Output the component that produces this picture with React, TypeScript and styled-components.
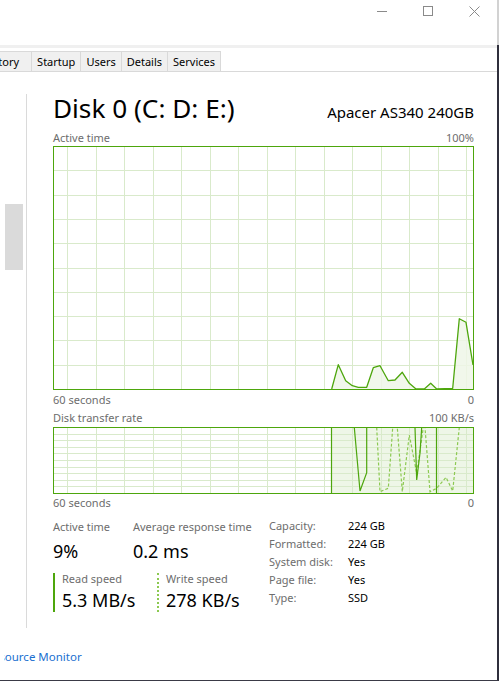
import React from 'react';
import styled, { createGlobalStyle } from 'styled-components';

const GREEN = '#4da60c';
const GRID = '#d9eacb';
const FILL = '#eef6e7';
const WRITE = '#8cc951';
const MUTED = '#6d6d6d';

const GlobalStyle = createGlobalStyle`
    html, body {
        margin: 0;
        padding: 0;
        background: #ffffff;
        font-family: "Noto Sans", "DejaVu Sans", sans-serif;
        color: #000000;
    }
`;

const Window = styled.div`
    width: 499px;
    height: 681px;
    display: flex;
    flex-direction: column;
    overflow: hidden;
`;

const TitleBar = styled.div`
    height: 45px;
    box-sizing: border-box;
    display: flex;
    justify-content: flex-end;
    align-items: flex-start;
    border-right: 2px solid #d2d2d2;
`;

const CaptionButton = styled.div`
    width: 46px;
    height: 22px;
    display: flex;
    align-items: center;
    justify-content: center;
`;

const Frame = styled.div`
    flex: 1;
    box-sizing: border-box;
    display: flex;
    flex-direction: column;
    border-right: 2px solid #2f2f3c;
    border-bottom: 1px solid #3a3a46;
    overflow: hidden;
`;

const Band = styled.div`
    height: 3px;
    background: #f0f0f0;
`;

const TabStrip = styled.div`
    margin-top: 3px;
    display: flex;
    border-bottom: 1px solid #d9d9d9;
`;

// the first tab is scrolled partly out of view on the left
const Tab = styled.div<{ $lead?: number }>`
    height: 20px;
    box-sizing: border-box;
    margin-left: ${p => (p.$lead ? `${p.$lead}px` : '-1px')};
    padding: 0 ${p => (p.$lead ? '12px' : '5px')} 0 5px;
    border: 1px solid #d9d9d9;
    border-bottom: none;
    background: #f0f0f0;
    font-size: 11px;
    line-height: 19px;
    white-space: nowrap;
    color: #000;
`;

const Body = styled.div`
    display: flex;
`;

const Sidebar = styled.div`
    width: 26px;
    height: 534px;
    margin-top: 22px;
    border-right: 1px solid #dadada;
`;

const ScrollThumb = styled.div`
    width: 18px;
    height: 66px;
    margin: 110px 0 0 5px;
    background: #dadada;
`;

const Main = styled.div`
    width: 421px;
    margin-left: 26px;
    padding-top: 20px;
`;

const HeaderRow = styled.div`
    display: flex;
    justify-content: space-between;
    align-items: baseline;
    height: 32px;
`;

const DiskTitle = styled.div`
    font-size: 26.2px;
    line-height: 32px;
    white-space: nowrap;
`;

const DiskModel = styled.div`
    font-size: 15px;
    white-space: nowrap;
`;

const CaptionRow = styled.div<{ $h: number; $end?: boolean }>`
    height: ${p => p.$h}px;
    display: flex;
    justify-content: space-between;
    align-items: ${p => (p.$end ? 'flex-end' : 'center')};
    font-size: 11px;
    line-height: 16px;
    color: ${MUTED};
`;

const ChartSvg = styled.svg`
    display: block;
`;

const Stats = styled.div`
    display: flex;
    align-items: flex-start;
    padding-top: 5px;
`;

const LeftStats = styled.div`
    width: 216px;
    padding-top: 2px;
`;

const Pair = styled.div`
    display: flex;
`;

const StatCell = styled.div<{ $w?: number }>`
    width: ${p => (p.$w ? `${p.$w}px` : 'auto')};
`;

const StatLabel = styled.div`
    font-size: 11px;
    line-height: 16px;
    color: ${MUTED};
    white-space: nowrap;
`;

const StatValue = styled.div`
    margin-top: 4px;
    font-size: 18px;
    line-height: 24px;
    white-space: nowrap;
`;

const SpeedRow = styled.div`
    display: flex;
    margin-top: 10px;
`;

const SpeedBlock = styled.div<{ $dotted?: boolean; $w?: number }>`
    width: ${p => (p.$w ? `${p.$w}px` : 'auto')};
    box-sizing: border-box;
    padding-left: 7px;
    border-left: 2px ${p => (p.$dotted ? `dotted ${WRITE}` : `solid ${GREEN}`)};
`;

const SpeedLabel = styled.div`
    font-size: 11px;
    line-height: 12px;
    color: ${MUTED};
    white-space: nowrap;
`;

const SpeedValue = styled.div`
    margin-top: 3px;
    font-size: 18px;
    line-height: 24px;
    white-space: nowrap;
`;

const Props = styled.div`
    display: grid;
    grid-template-columns: 79px auto;
    font-size: 11px;
    line-height: 18px;
`;

const PropKey = styled.div`
    color: ${MUTED};
`;

const PropVal = styled.div`
    color: #000;
`;

// footer is scrolled sideways, its text starts out of view
const FooterBar = styled.div`
    margin: 21px 0 0 4px;
    overflow: hidden;
`;

const FooterLink = styled.div`
    margin-left: -51px;
    font-size: 11.5px;
    line-height: 16px;
    color: #1a6fd0;
    white-space: nowrap;
`;

const gridXs = Array.from({ length: 15 }, (_, i) => Math.round(14 + i * 28.5));

type Pt = [number, number];

const pts = (list: Pt[]) => list.map(p => p.join(',')).join(' ');

const activeLine: Pt[] = [
    [278.7, 243], [285.3, 218.7], [292.7, 234.7], [299.3, 239.7], [305.3, 241.3],
    [313.7, 241.3], [320.3, 221.7], [327, 219.7], [335.3, 234.7], [342, 234],
    [349.3, 226.3], [356.3, 237.3], [363, 243], [371.3, 243], [377.7, 237.3],
    [383.7, 243], [399.7, 242.3], [406.3, 172.7], [413, 176.3], [420, 219],
];

const readLine: Pt[] = [
    [278.5, 66], [278.5, 0.5], [301.3, 0.5], [307, 64], [313.7, 45.7], [313.7, 0.5],
    [362, 0.5], [363.7, 53], [367, 26], [368.7, 0.5], [383.5, 0.5], [383.5, 66],
];

const writeLine: Pt[] = [
    [323.7, 0.5], [327, 64.7], [335.3, 61.3], [339.7, 0.5], [344.3, 0.5], [349.3, 64.7],
    [356.3, 8], [363.7, 46.3], [370.3, 0.5], [372, 0.5], [377, 64.7], [383.7, 61.3],
    [393, 50.3], [399.7, 64], [406.3, 0.5],
];

function Grid({ h, rows }: { h: number; rows: number }) {
    const step = (h - 1) / rows;
    return (
        <g stroke={GRID} strokeWidth={1} shapeRendering="crispEdges">
            {gridXs.map(x => (
                <line key={`v${x}`} x1={x + 0.5} y1={0} x2={x + 0.5} y2={h} />
            ))}
            {Array.from({ length: rows - 1 }, (_, i) => {
                const y = Math.round(step * (i + 1)) + 0.5;
                return <line key={`h${i}`} x1={0} y1={y} x2={420} y2={y} />;
            })}
        </g>
    );
}

function ActiveChart() {
    const h = 244;
    return (
        <ChartSvg width={421} height={h}>
            <Grid h={h} rows={10} />
            <polygon points={pts([...activeLine, [420, 243], [278.7, 243]])} fill={FILL} opacity={0.85} />
            <polyline points={pts(activeLine)} fill="none" stroke={GREEN} strokeWidth={1.3} strokeLinejoin="round" />
            <rect x={0.5} y={0.5} width={420} height={h - 1} fill="none" stroke={GREEN} strokeWidth={1} shapeRendering="crispEdges" />
        </ChartSvg>
    );
}

function TransferChart() {
    const h = 67;
    return (
        <ChartSvg width={421} height={h}>
            <rect x={279} y={0} width={142} height={h} fill={FILL} />
            <Grid h={h} rows={10} />
            <polyline points={pts(writeLine)} fill="none" stroke={WRITE} strokeWidth={1.2} strokeDasharray="3 2" />
            <polyline points={pts(readLine)} fill="none" stroke={GREEN} strokeWidth={1.2} />
            <rect x={0.5} y={0.5} width={420} height={h - 1} fill="none" stroke={GREEN} strokeWidth={1} shapeRendering="crispEdges" />
        </ChartSvg>
    );
}

const glyph = { stroke: '#8a8a8a', strokeWidth: 1, fill: 'none', shapeRendering: 'crispEdges' as const };

export default function App() {
    return (
        <Window>
            <GlobalStyle />
            <TitleBar>
                <CaptionButton>
                    <svg width={10} height={10}><line x1={0} y1={5.5} x2={10} y2={5.5} {...glyph} /></svg>
                </CaptionButton>
                <CaptionButton>
                    <svg width={10} height={10}><rect x={0.5} y={0.5} width={9} height={9} {...glyph} /></svg>
                </CaptionButton>
                <CaptionButton>
                    <svg width={11} height={11}>
                        <path d="M0.5 0.5 L10.5 10.5 M10.5 0.5 L0.5 10.5" stroke="#8a8a8a" strokeWidth={1} fill="none" />
                    </svg>
                </CaptionButton>
            </TitleBar>
            <Frame>
                <Band />
                <TabStrip>
                    <Tab $lead={-46}>App history</Tab>
                    <Tab>Startup</Tab>
                    <Tab>Users</Tab>
                    <Tab>Details</Tab>
                    <Tab>Services</Tab>
                </TabStrip>
                <Body>
                    <Sidebar>
                        <ScrollThumb />
                    </Sidebar>
                    <Main>
                        <HeaderRow>
                            <DiskTitle>Disk 0 (C: D: E:)</DiskTitle>
                            <DiskModel>Apacer AS340 240GB</DiskModel>
                        </HeaderRow>
                        <CaptionRow $h={22} $end>
                            <span>Active time</span>
                            <span>100%</span>
                        </CaptionRow>
                        <ActiveChart />
                        <CaptionRow $h={19}>
                            <span>60 seconds</span>
                            <span>0</span>
                        </CaptionRow>
                        <CaptionRow $h={18}>
                            <span>Disk transfer rate</span>
                            <span>100 KB/s</span>
                        </CaptionRow>
                        <TransferChart />
                        <CaptionRow $h={18}>
                            <span>60 seconds</span>
                            <span>0</span>
                        </CaptionRow>
                        <Stats>
                            <LeftStats>
                                <Pair>
                                    <StatCell $w={80}>
                                        <StatLabel>Active time</StatLabel>
                                        <StatValue>9%</StatValue>
                                    </StatCell>
                                    <StatCell>
                                        <StatLabel>Average response time</StatLabel>
                                        <StatValue>0.2 ms</StatValue>
                                    </StatCell>
                                </Pair>
                                <SpeedRow>
                                    <SpeedBlock $w={104}>
                                        <SpeedLabel>Read speed</SpeedLabel>
                                        <SpeedValue>5.3 MB/s</SpeedValue>
                                    </SpeedBlock>
                                    <SpeedBlock $dotted>
                                        <SpeedLabel>Write speed</SpeedLabel>
                                        <SpeedValue>278 KB/s</SpeedValue>
                                    </SpeedBlock>
                                </SpeedRow>
                            </LeftStats>
                            <Props>
                                <PropKey>Capacity:</PropKey><PropVal>224 GB</PropVal>
                                <PropKey>Formatted:</PropKey><PropVal>224 GB</PropVal>
                                <PropKey>System disk:</PropKey><PropVal>Yes</PropVal>
                                <PropKey>Page file:</PropKey><PropVal>Yes</PropVal>
                                <PropKey>Type:</PropKey><PropVal>SSD</PropVal>
                            </Props>
                        </Stats>
                    </Main>
                </Body>
                <FooterBar>
                    <FooterLink>Open Resource Monitor</FooterLink>
                </FooterBar>
            </Frame>
        </Window>
    );
}
